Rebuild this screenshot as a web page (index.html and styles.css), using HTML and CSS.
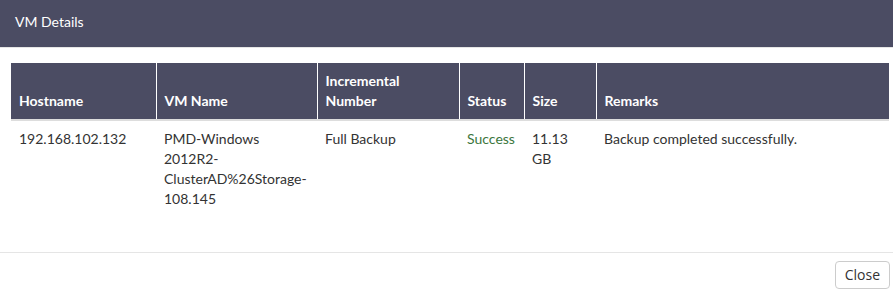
FILE: index.html
```html
<!DOCTYPE html>
<html>
<head>
<meta charset="utf-8">
<link rel="stylesheet" href="styles.css">
</head>
<body>
<div class="modal">
  <div class="modal-header">
    <h4 class="modal-title">VM Details</h4>
  </div>
  <div class="modal-body">
    <table class="details">
      <colgroup>
        <col class="c-host">
        <col class="c-vm">
        <col class="c-inc">
        <col class="c-status">
        <col class="c-size">
        <col class="c-remarks">
      </colgroup>
      <thead>
        <tr>
          <th>Hostname</th>
          <th>VM Name</th>
          <th>Incremental Number</th>
          <th>Status</th>
          <th>Size</th>
          <th>Remarks</th>
        </tr>
      </thead>
      <tbody>
        <tr>
          <td>192.168.102.132</td>
          <td>PMD-Windows 2012R2-ClusterAD%26Storage-108.145</td>
          <td>Full Backup</td>
          <td class="success">Success</td>
          <td>11.13 GB</td>
          <td>Backup completed successfully.</td>
        </tr>
      </tbody>
    </table>
  </div>
  <div class="modal-footer">
    <button class="btn">Close</button>
  </div>
</div>
</body>
</html>
```

FILE: styles.css
```css
html, body {
  margin: 0;
  padding: 0;
  background: #fff;
}
body {
  font-family: Lato, "Open Sans", sans-serif;
  font-size: 14px;
  line-height: 20px;
  color: #333;
}
.modal {
  width: 893px;
}
.modal-header {
  background: #4b4c63;
  height: 48px;
  box-sizing: border-box;
  padding: 12px 15px 14px;
  border-bottom: 1px solid #e5e5e5;
}
.modal-title {
  margin: 0;
  font-size: 14px;
  font-weight: normal;
  line-height: 20px;
  color: #fff;
}
.modal-body {
  padding: 15px 4px 35px 11px;
}
.details {
  width: 878px;
  table-layout: fixed;
  border-collapse: collapse;
  border-spacing: 0;
}
.c-host { width: 145px; }
.c-vm { width: 161px; }
.c-inc { width: 142px; }
.c-status { width: 65px; }
.c-size { width: 72px; }
.c-remarks { width: 293px; }
.details th {
  background: #4b4c63;
  color: #fff;
  font-weight: bold;
  text-align: left;
  vertical-align: bottom;
  padding: 8px 8px;
  border-right: 1px solid #fff;
  border-bottom: 2px solid #ddd;
}
.details th:last-child {
  border-right: none;
}
.details td {
  padding: 8px 8px;
  vertical-align: top;
  text-align: left;
}
.details td.success {
  color: #3c763d;
}
.modal-footer {
  border-top: 1px solid #e5e5e5;
  padding: 8px 3px 0 0;
  display: flex;
  justify-content: flex-end;
}
.btn {
  font-family: "Open Sans", "Noto Sans", sans-serif;
  font-size: 14px;
  line-height: 20px;
  color: #333;
  background: #fff;
  border: 1px solid #ccc;
  border-radius: 4px;
  padding: 3px 9px;
  height: 28px;
  box-sizing: border-box;
}
```
